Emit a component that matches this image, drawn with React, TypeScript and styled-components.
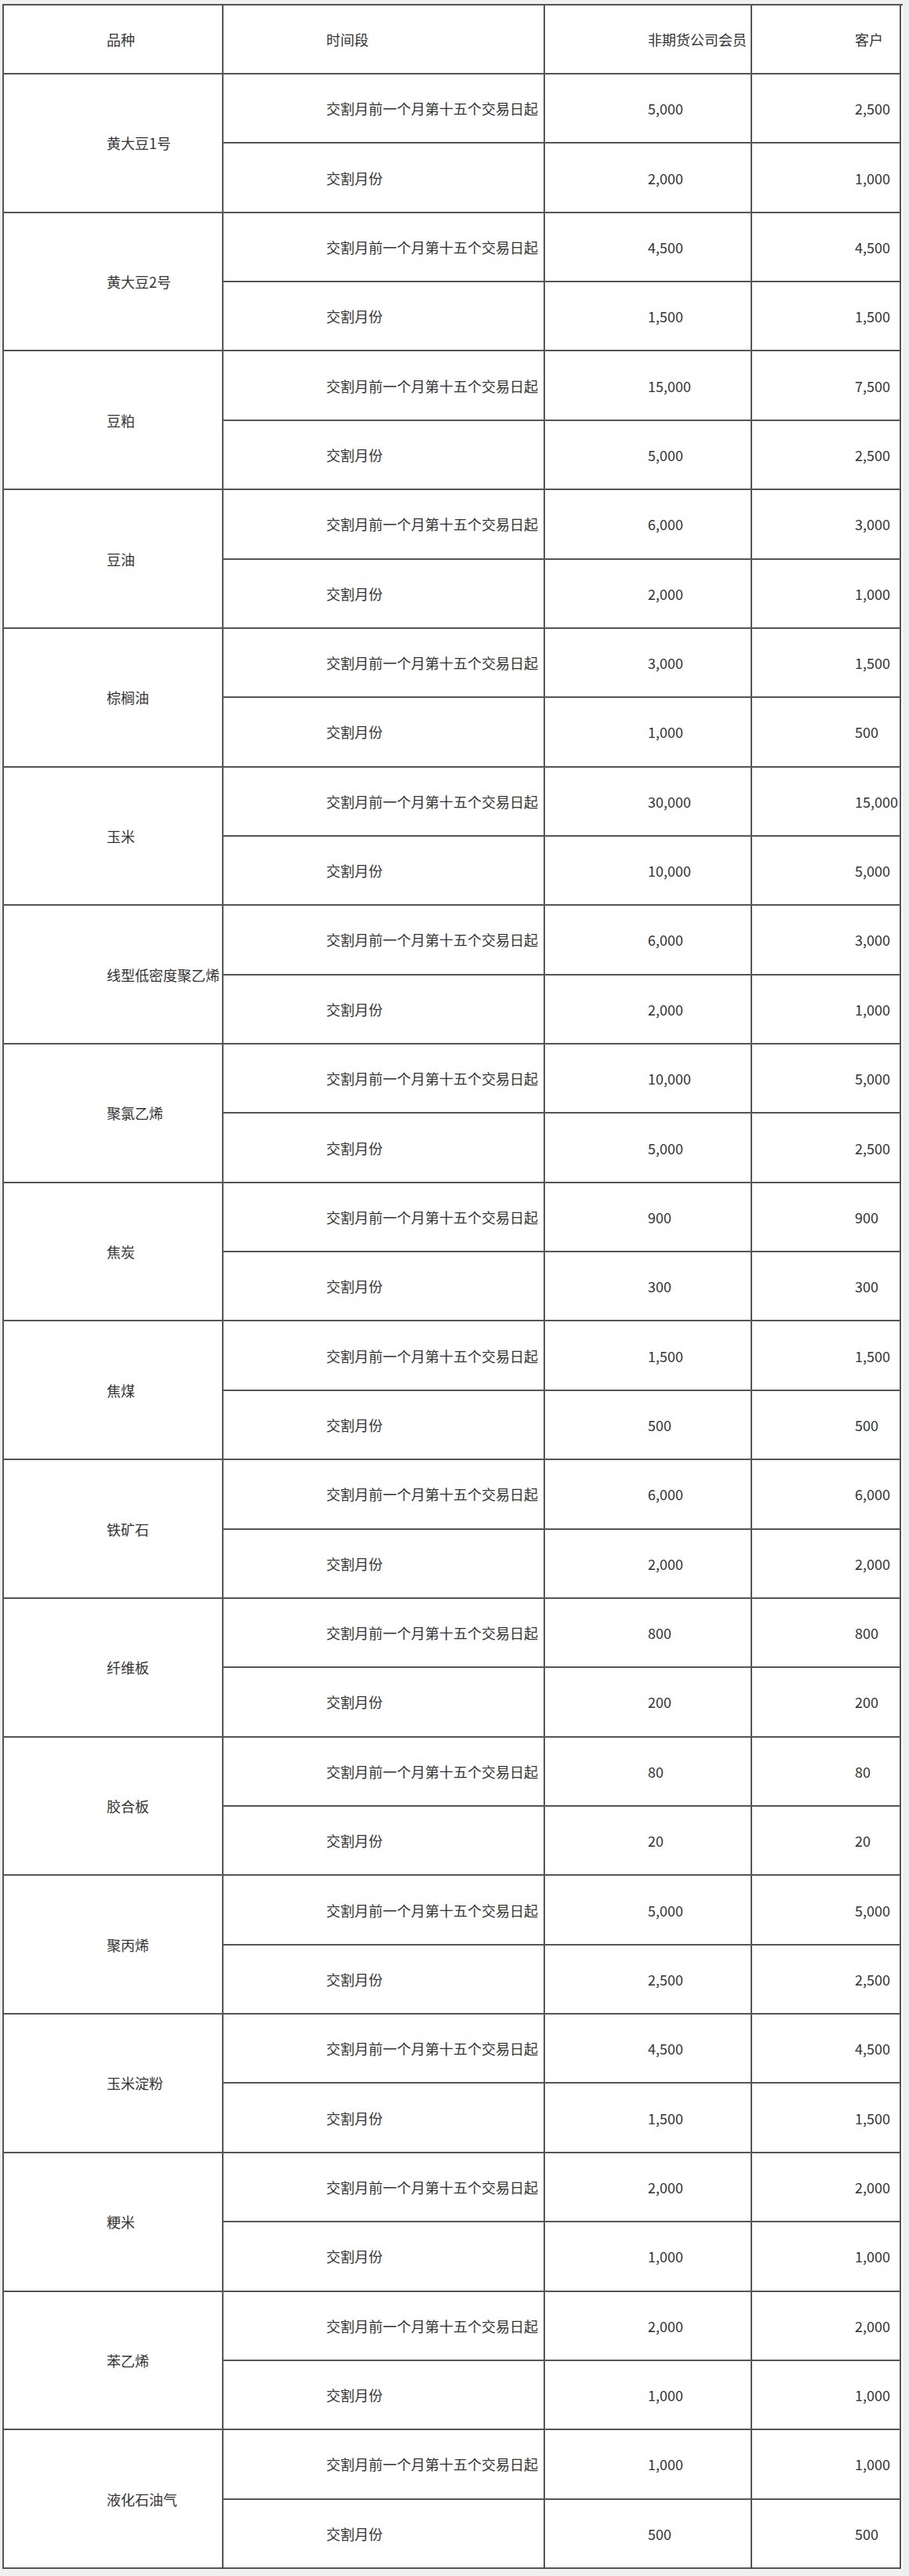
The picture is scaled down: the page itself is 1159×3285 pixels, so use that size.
import React from "react";
import styled, { createGlobalStyle } from "styled-components";

const GlobalStyle = createGlobalStyle`
  html, body {
    margin: 0;
    padding: 0;
    background: #f0f0f0;
  }
  body {
    font-family: "Noto Sans CJK SC", "Noto Sans", sans-serif;
  }
`;

const Page = styled.div`
  padding: 5px 0 9px 3px;
  min-height: 3285px;
  box-sizing: border-box;
`;

const Grid = styled.div`
  display: grid;
  grid-template-columns: 280px 410px 264px 190px;
  grid-template-rows: 88px repeat(36, 88.36px);
  width: 1146px;
  background: #ffffff;
  border-top: 2px solid #555555;
  border-left: 2px solid #555555;
`;

const Cell = styled.div<{ $span?: number }>`
  grid-row: span ${(p) => p.$span ?? 1};
  display: flex;
  align-items: center;
  padding-left: 131px;
  border-right: 2px solid #555555;
  border-bottom: 2px solid #555555;
  font-size: 18px;
  line-height: 1;
  color: #333333;
  white-space: nowrap;
  overflow: hidden;
  min-width: 0;
`;

type Row = { name: string; a: [string, string]; b: [string, string] };

const rows: Row[] = [
  { name: "黄大豆1号", a: ["5,000", "2,500"], b: ["2,000", "1,000"] },
  { name: "黄大豆2号", a: ["4,500", "4,500"], b: ["1,500", "1,500"] },
  { name: "豆粕", a: ["15,000", "7,500"], b: ["5,000", "2,500"] },
  { name: "豆油", a: ["6,000", "3,000"], b: ["2,000", "1,000"] },
  { name: "棕榈油", a: ["3,000", "1,500"], b: ["1,000", "500"] },
  { name: "玉米", a: ["30,000", "15,000"], b: ["10,000", "5,000"] },
  { name: "线型低密度聚乙烯", a: ["6,000", "3,000"], b: ["2,000", "1,000"] },
  { name: "聚氯乙烯", a: ["10,000", "5,000"], b: ["5,000", "2,500"] },
  { name: "焦炭", a: ["900", "900"], b: ["300", "300"] },
  { name: "焦煤", a: ["1,500", "1,500"], b: ["500", "500"] },
  { name: "铁矿石", a: ["6,000", "6,000"], b: ["2,000", "2,000"] },
  { name: "纤维板", a: ["800", "800"], b: ["200", "200"] },
  { name: "胶合板", a: ["80", "80"], b: ["20", "20"] },
  { name: "聚丙烯", a: ["5,000", "5,000"], b: ["2,500", "2,500"] },
  { name: "玉米淀粉", a: ["4,500", "4,500"], b: ["1,500", "1,500"] },
  { name: "粳米", a: ["2,000", "2,000"], b: ["1,000", "1,000"] },
  { name: "苯乙烯", a: ["2,000", "2,000"], b: ["1,000", "1,000"] },
  { name: "液化石油气", a: ["1,000", "1,000"], b: ["500", "500"] },
];

export default function App() {
  return (
    <>
      <GlobalStyle />
      <Page>
        <Grid>
          <Cell>品种</Cell>
          <Cell>时间段</Cell>
          <Cell>非期货公司会员</Cell>
          <Cell>客户</Cell>
          {rows.map((r) => (
            <React.Fragment key={r.name}>
              <Cell $span={2}>{r.name}</Cell>
              <Cell>交割月前一个月第十五个交易日起</Cell>
              <Cell>{r.a[0]}</Cell>
              <Cell>{r.a[1]}</Cell>
              <Cell>交割月份</Cell>
              <Cell>{r.b[0]}</Cell>
              <Cell>{r.b[1]}</Cell>
            </React.Fragment>
          ))}
        </Grid>
      </Page>
    </>
  );
}
